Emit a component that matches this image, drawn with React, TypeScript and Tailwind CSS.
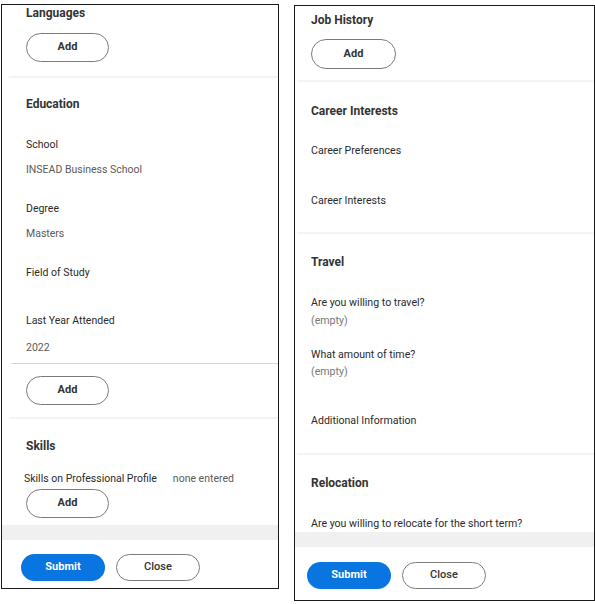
import React from 'react';

const font = { fontFamily: 'Roboto, "Liberation Sans", sans-serif' };

const OutlineButton: React.FC<{ label: string; className?: string }> = ({ label, className = '' }) => (
  <button
    type="button"
    className={`flex items-center justify-center rounded-full border border-[#7b7b7b] bg-white text-[11px] font-bold text-[#333] ${className}`}
  >
    {label}
  </button>
);

const Heading: React.FC<{ children: React.ReactNode; className?: string }> = ({ children, className = '' }) => (
  <h2 className={`text-[12px] leading-4 font-bold text-[#333] ${className}`}>{children}</h2>
);

const Label: React.FC<{ children: React.ReactNode; className?: string }> = ({ children, className = '' }) => (
  <div className={`leading-4 text-[#2a2a2a] ${className}`}>{children}</div>
);

const Value: React.FC<{ children: React.ReactNode; className?: string }> = ({ children, className = '' }) => (
  <div className={`leading-4 text-[#5a5a5a] ${className}`}>{children}</div>
);

const Footer: React.FC<{ top: string }> = ({ top }) => (
  <div className={`flex gap-[11px] ${top}`}>
    <button
      type="button"
      className="flex h-[27px] w-[84px] items-center justify-center rounded-full bg-[#0875e1] text-[11px] font-bold text-white"
    >
      Submit
    </button>
    <OutlineButton label="Close" className="h-[27px] w-[84px] font-medium" />
  </div>
);

const LeftPanel: React.FC = () => (
  <div className="flex h-[585px] w-[278px] flex-col overflow-hidden border border-[#1a1a1a] bg-white text-[10.5px]">
    <div className="ml-[7px] border-b-2 border-[#f4f4f4] pb-[14px] pl-[17px]">
      <Heading>Languages</Heading>
      <OutlineButton label="Add" className="mt-[12px] h-[29px] w-[83px]" />
    </div>

    <div className="ml-[7px] border-b-2 border-[#f4f4f4] pb-[12px] pt-[18px]">
      <div className="pl-[17px]">
        <Heading>Education</Heading>
        <Label className="mt-[25px]">School</Label>
        <Value className="mt-[9px]">INSEAD Business School</Value>
        <Label className="mt-[23px]">Degree</Label>
        <Value className="mt-[9px]">Masters</Value>
        <Label className="mt-[23px]">Field of Study</Label>
        <Label className="mt-[32px]">Last Year Attended</Label>
        <Value className="mt-[11px]">2022</Value>
      </div>
      <div className="ml-[2px] mt-[7px] h-px bg-[#d6d6d6]" />
      <div className="pl-[17px]">
        <OutlineButton label="Add" className="mt-[12px] h-[29px] w-[83px]" />
      </div>
    </div>

    <div className="ml-[7px] pl-[17px] pt-[19px]">
      <Heading>Skills</Heading>
      <div className="-ml-[2px] mt-[17px] flex leading-4">
        <span className="text-[#2a2a2a]">Skills on Professional Profile</span>
        <span className="ml-[16px] text-[#5a5a5a]">none entered</span>
      </div>
      <OutlineButton label="Add" className="mt-[2px] h-[29px] w-[83px]" />
    </div>

    <div className="mt-[7px] h-[15px] bg-[#f0f0f0]" />

    <div className="pl-[19px]">
      <Footer top="mt-[14px]" />
    </div>
  </div>
);

const RightPanel: React.FC = () => (
  <div className="flex h-[596px] w-[301px] flex-col overflow-hidden border border-[#1a1a1a] bg-white text-[10.6px]">
    <div className="ml-[2px] border-b-2 border-[#f4f4f4] pb-[11px] pl-[14px] pt-[6px]">
      <Heading>Job History</Heading>
      <OutlineButton label="Add" className="mt-[11px] h-[30px] w-[85px]" />
    </div>

    <div className="ml-[2px] border-b-2 border-[#f4f4f4] pb-[23px] pl-[14px] pt-[21px]">
      <Heading>Career Interests</Heading>
      <Label className="mt-[24px]">Career Preferences</Label>
      <Label className="mt-[34px]">Career Interests</Label>
    </div>

    <div className="ml-[2px] border-b-2 border-[#f4f4f4] pb-[24px] pl-[14px] pt-[20px]">
      <Heading>Travel</Heading>
      <Label className="mt-[25px]">Are you willing to travel?</Label>
      <Value className="mt-[2px] text-[#777]">(empty)</Value>
      <Label className="mt-[18px]">What amount of time?</Label>
      <Value className="mt-[1px] text-[#777]">(empty)</Value>
      <Label className="mt-[33px]">Additional Information</Label>
    </div>

    <div className="ml-[2px] pl-[14px] pt-[20px]">
      <Heading>Relocation</Heading>
      <Label className="mt-[25px]">Are you willing to relocate for the short term?</Label>
    </div>

    <div className="h-[15px] bg-[#f0f0f0]" />

    <div className="pl-[12px]">
      <Footer top="mt-[15px]" />
    </div>
  </div>
);

export default function App() {
  return (
    <div className="flex h-[604px] w-[595px] items-start bg-white pl-px" style={font}>
      <div className="mt-[4px]">
        <LeftPanel />
      </div>
      <div className="ml-[15px] mt-[5px]">
        <RightPanel />
      </div>
    </div>
  );
}
